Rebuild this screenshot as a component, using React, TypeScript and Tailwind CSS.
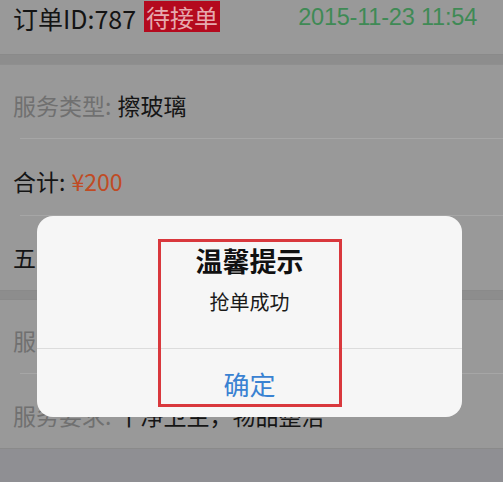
import React from 'react';

const font = { fontFamily: '"Noto Sans CJK SC", "Liberation Sans", sans-serif' };

const Row: React.FC<{ children: React.ReactNode; h: string }> = ({ children, h }) => (
  <div className={`flex items-center px-[13px] pt-[8px] text-[23px] leading-none ${h}`}>{children}</div>
);

const App: React.FC = () => {
  return (
    <div className="relative flex h-[482px] w-full flex-col overflow-hidden bg-[#999999]" style={font}>
      {/* order header */}
      <div className="flex h-[55px] items-start justify-between border-b border-[#8a8a8a] pl-[13px] pr-[26px]">
        <div className="flex items-center text-[25px] leading-none text-[#141414]">
          <span className="pt-[4px]">订单ID:787</span>
          <span className="ml-[8px] mt-[1px] flex h-[31px] w-[76px] items-center justify-center bg-[#b40a1e] text-[24px] text-[#e6a9ae]">
            待接单
          </span>
        </div>
        <span
          className="pt-[6px] text-[23.5px] leading-none tracking-[-0.2px] text-[#3f8a55]"
          style={{ fontFamily: '"Liberation Sans", sans-serif' }}
        >
          2015-11-23 11:54
        </span>
      </div>
      <div className="h-[10px] border-b border-[#8f8f8f] bg-[#8d8d8d]" />

      <Row h="h-[73px]">
        <span className="text-[#707070]">服务类型:</span>
        <span className="ml-[6px] text-[#151515]">擦玻璃</span>
      </Row>
      <div className="ml-[20px] h-px bg-[#a6a6a6]" />
      <Row h="h-[76px]">
        <span className="text-[#151515]">合计:</span>
        <span className="ml-[6px] text-[#c04b24]">¥200</span>
      </Row>
      <div className="ml-[20px] h-px bg-[#a6a6a6]" />
      <Row h="h-[74px]">
        <span className="text-[#151515]">五星小区3栋201室</span>
      </Row>
      <div className="h-[10px] border-y border-[#8a8a8a] bg-[#8d8d8d]" />
      <Row h="h-[73px]">
        <span className="text-[#707070]">服务时间:</span>
        <span className="ml-[6px] text-[#151515]">2015-11-24 09:00</span>
      </Row>
      <div className="ml-[20px] h-px bg-[#a6a6a6]" />
      <Row h="h-[74px]">
        <span className="text-[#707070]">服务要求:</span>
        <span className="ml-[6px] text-[#151515]">干净卫生，物品整洁</span>
      </Row>
      <div className="flex-1 border-t border-[#8a8a8a] bg-[#8f8f93]" />

      {/* alert */}
      <div className="absolute left-[37px] top-[216px] flex h-[201px] w-[425px] flex-col overflow-hidden rounded-[16px] bg-[#f6f6f6]">
        <div className="flex h-[132px] flex-col items-center pt-[31px]">
          <span className="text-[27px] font-bold leading-none text-[#111111]">温馨提示</span>
          <span className="mt-[18px] text-[20px] leading-none text-[#1a1a1a]">抢单成功</span>
        </div>
        <div className="h-px bg-[#dcdcdc]" />
        <div className="flex flex-1 items-center justify-center pt-[2px] text-[26px] leading-none text-[#3a82d2]">
          确定
        </div>
      </div>

      {/* annotation box */}
      <div className="absolute left-[158px] top-[239px] h-[168px] w-[184px] border-[3px] border-[#d9383d]" />
    </div>
  );
};

export default App;
